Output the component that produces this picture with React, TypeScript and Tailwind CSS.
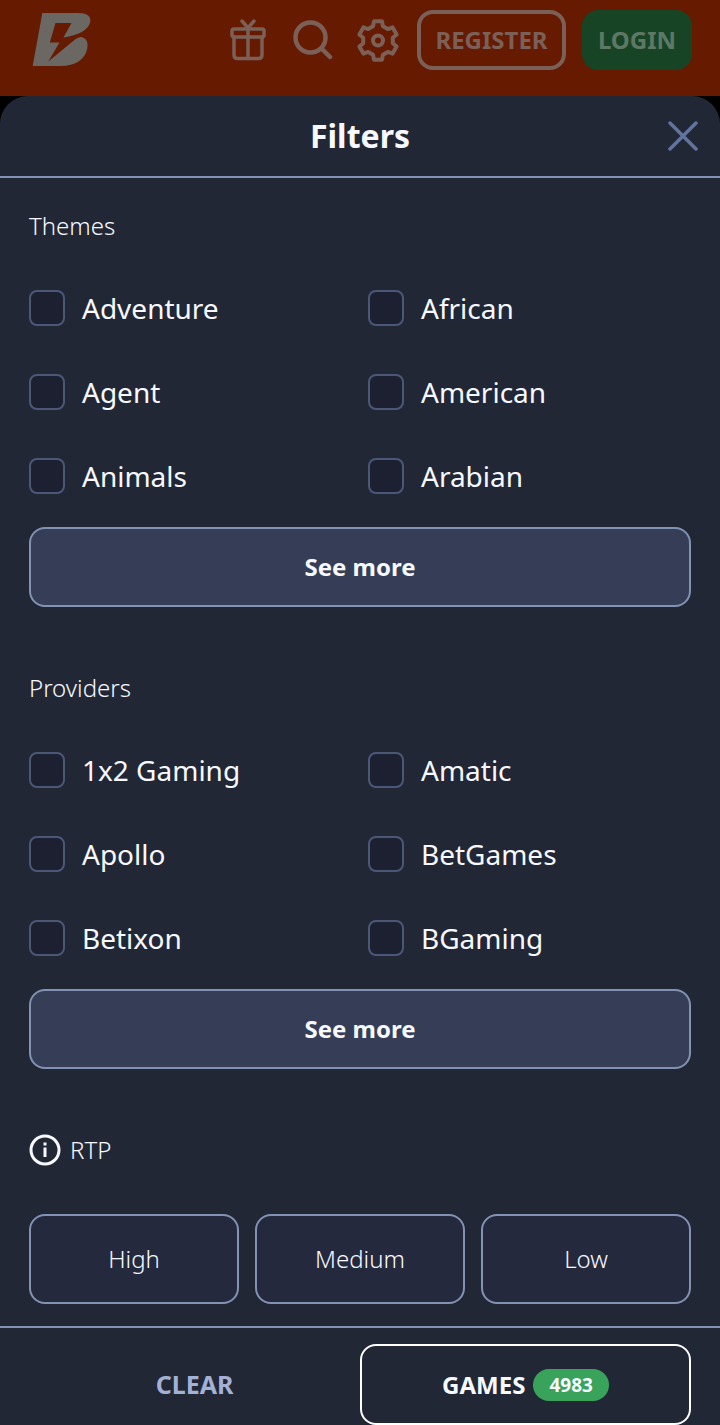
import { useState } from "react";

const themes = ["Adventure", "African", "Agent", "American", "Animals", "Arabian"];
const providers = ["1x2 Gaming", "Amatic", "Apollo", "BetGames", "Betixon", "BGaming"];
const rtpLevels = ["High", "Medium", "Low"];

function Logo() {
  return (
    <svg viewBox="0 0 60 56" className="w-[60px] h-14" fill="currentColor" aria-hidden="true">
      <path d="M10.3 1H46C55 1 59 4 58.3 9.500C57 18 46 23.500 31.500 25.500L39.500 11H23.500L17.800 30.500H27.500L16.300 49.500L43 27.500Q46 24.800 49.500 25C54.500 26.500 56.300 30 55.300 36C53.500 47 44 54 28 54H.7Z" />
    </svg>
  );
}

function GiftIcon() {
  return (
    <svg viewBox="0 0 36 42" className="w-9 h-[42px]" fill="none" stroke="currentColor" strokeWidth="3.500" strokeLinejoin="round" strokeLinecap="round" aria-hidden="true">
      <rect x="2" y="10" width="32" height="8" rx="2" />
      <path d="M4 18V36Q4 39.500 7.500 39.500H28.500Q32 39.500 32 36V18M18 10V39.500M12 2L18 9L24 2" />
    </svg>
  );
}

function SearchIcon() {
  return (
    <svg viewBox="0 0 40 40" className="size-10" fill="none" stroke="currentColor" strokeWidth="4.500" strokeLinecap="round" aria-hidden="true">
      <circle cx="17.500" cy="17.500" r="15" />
      <path d="M28.500 28.500L37 37" />
    </svg>
  );
}

function GearIcon() {
  return (
    <svg viewBox="-21 -21.500 42 43" className="w-[42px] h-[43px]" fill="none" stroke="currentColor" strokeWidth="4" strokeLinejoin="round" aria-hidden="true">
      <path d="M-5-14.200L-4-19.200H4L5-14.200L9.800-11.400L14.600-13.100L18.600-6.100L14.800-2.800V2.800L18.600 6.100L14.600 13.100L9.800 11.400L5 14.200L4 19.200H-4L-5 14.200L-9.800 11.400L-14.600 13.100L-18.600 6.100L-14.800 2.800V-2.800L-18.600-6.100L-14.600-13.100L-9.800-11.400Z" />
      <circle r="5" />
    </svg>
  );
}

function CheckboxGroup({ title, options }: { title: string; options: string[] }) {
  const [selected, setSelected] = useState<string[]>([]);

  const toggle = (option: string) =>
    setSelected((prev) => (prev.includes(option) ? prev.filter((o) => o !== option) : [...prev, option]));

  return (
    <section>
      <h2 className="text-2xl leading-8 font-[350]">{title}</h2>
      <div className="mt-12 grid grid-cols-2 gap-x-4 gap-y-12">
        {options.map((option) => (
          <label key={option} className="flex items-center gap-[17px] h-9 text-[28px] leading-9 cursor-pointer">
            <input
              type="checkbox"
              checked={selected.includes(option)}
              onChange={() => toggle(option)}
              className="appearance-none size-9 shrink-0 rounded-lg border-2 border-[#4a5878] bg-[#1d2030] checked:bg-[#39a35c] cursor-pointer"
            />
            {option}
          </label>
        ))}
      </div>
      <button className="mt-[33px] w-full h-20 rounded-2xl border-2 border-[#8292b3] bg-[#353e56] text-2xl font-bold cursor-pointer">
        See more
      </button>
    </section>
  );
}

export default function App() {
  const [rtp, setRtp] = useState("");

  return (
    <div className="bg-black text-[#f7f9ff] font-['Noto_Sans',sans-serif]">
      {/* Site header, dimmed behind the sheet */}
      <header className="flex items-start justify-between h-24 pt-[10px] pl-8 pr-7 bg-[#661a00] text-[#7b6058]">
        <a href="#" aria-label="Home" className="text-[#6b6864] pt-[2px]"><Logo /></a>
        <div className="flex items-center h-15">
          <button aria-label="Bonuses" className="mr-[27px]"><GiftIcon /></button>
          <button aria-label="Search" className="mr-6"><SearchIcon /></button>
          <button aria-label="Settings" className="mr-[18px]"><GearIcon /></button>
          <button className="w-[149px] h-15 mr-4 rounded-2xl border-4 border-[#7b6058] text-2xl font-bold">REGISTER</button>
          <button className="w-[110px] h-15 rounded-2xl bg-[#174425] text-[#5e7866] text-2xl font-bold">LOGIN</button>
        </div>
      </header>

      <main className="rounded-t-[28px] bg-[#222736]">
        <div className="grid grid-cols-[1fr_auto_1fr] items-center h-[82px] px-[22px] border-b-2 border-[#8292b3]">
          <h1 className="col-start-2 text-[32px] leading-10 font-bold">Filters</h1>
          <button aria-label="Close" className="justify-self-end text-[#60749e] cursor-pointer">
            <svg viewBox="0 0 30 30" className="size-[30px]" fill="none" stroke="currentColor" strokeWidth="3.500" strokeLinecap="round" aria-hidden="true">
              <path d="M2 2L28 28M28 2L2 28" />
            </svg>
          </button>
        </div>

        <div className="flex flex-col gap-[65px] px-[29px] pt-8 pb-[22px]">
          <CheckboxGroup title="Themes" options={themes} />
          <CheckboxGroup title="Providers" options={providers} />

          <section>
            <h2 className="flex items-center gap-[9px] text-2xl leading-8 font-[350]">
              <svg viewBox="0 0 32 32" className="size-8" fill="none" stroke="currentColor" strokeWidth="3" aria-hidden="true">
                <circle cx="16" cy="16" r="14" />
                <path d="M16 13.500V23M16 8.500V11.500" />
              </svg>
              RTP
            </h2>
            <div className="mt-12 grid grid-cols-3 gap-4">
              {rtpLevels.map((level) => (
                <button
                  key={level}
                  onClick={() => setRtp(level)}
                  className={`h-[90px] rounded-2xl border-2 border-[#8292b3] text-2xl font-[350] cursor-pointer ${rtp === level ? "bg-[#353e56]" : "bg-[#25293e]"}`}
                >
                  {level}
                </button>
              ))}
            </div>
          </section>
        </div>

        <footer className="grid grid-cols-2 px-[29px] pt-4 border-t-2 border-[#8292b3]">
          <button className="h-[81px] text-[25px] font-bold text-[#a3b1d6] cursor-pointer">CLEAR</button>
          <button className="flex items-center justify-center gap-2 h-[81px] rounded-2xl border-2 border-white text-2xl font-bold cursor-pointer">
            GAMES
            <span className="px-4 h-8 rounded-full bg-[#39a35c] text-[19px] leading-8">4983</span>
          </button>
        </footer>
      </main>
    </div>
  );
}
